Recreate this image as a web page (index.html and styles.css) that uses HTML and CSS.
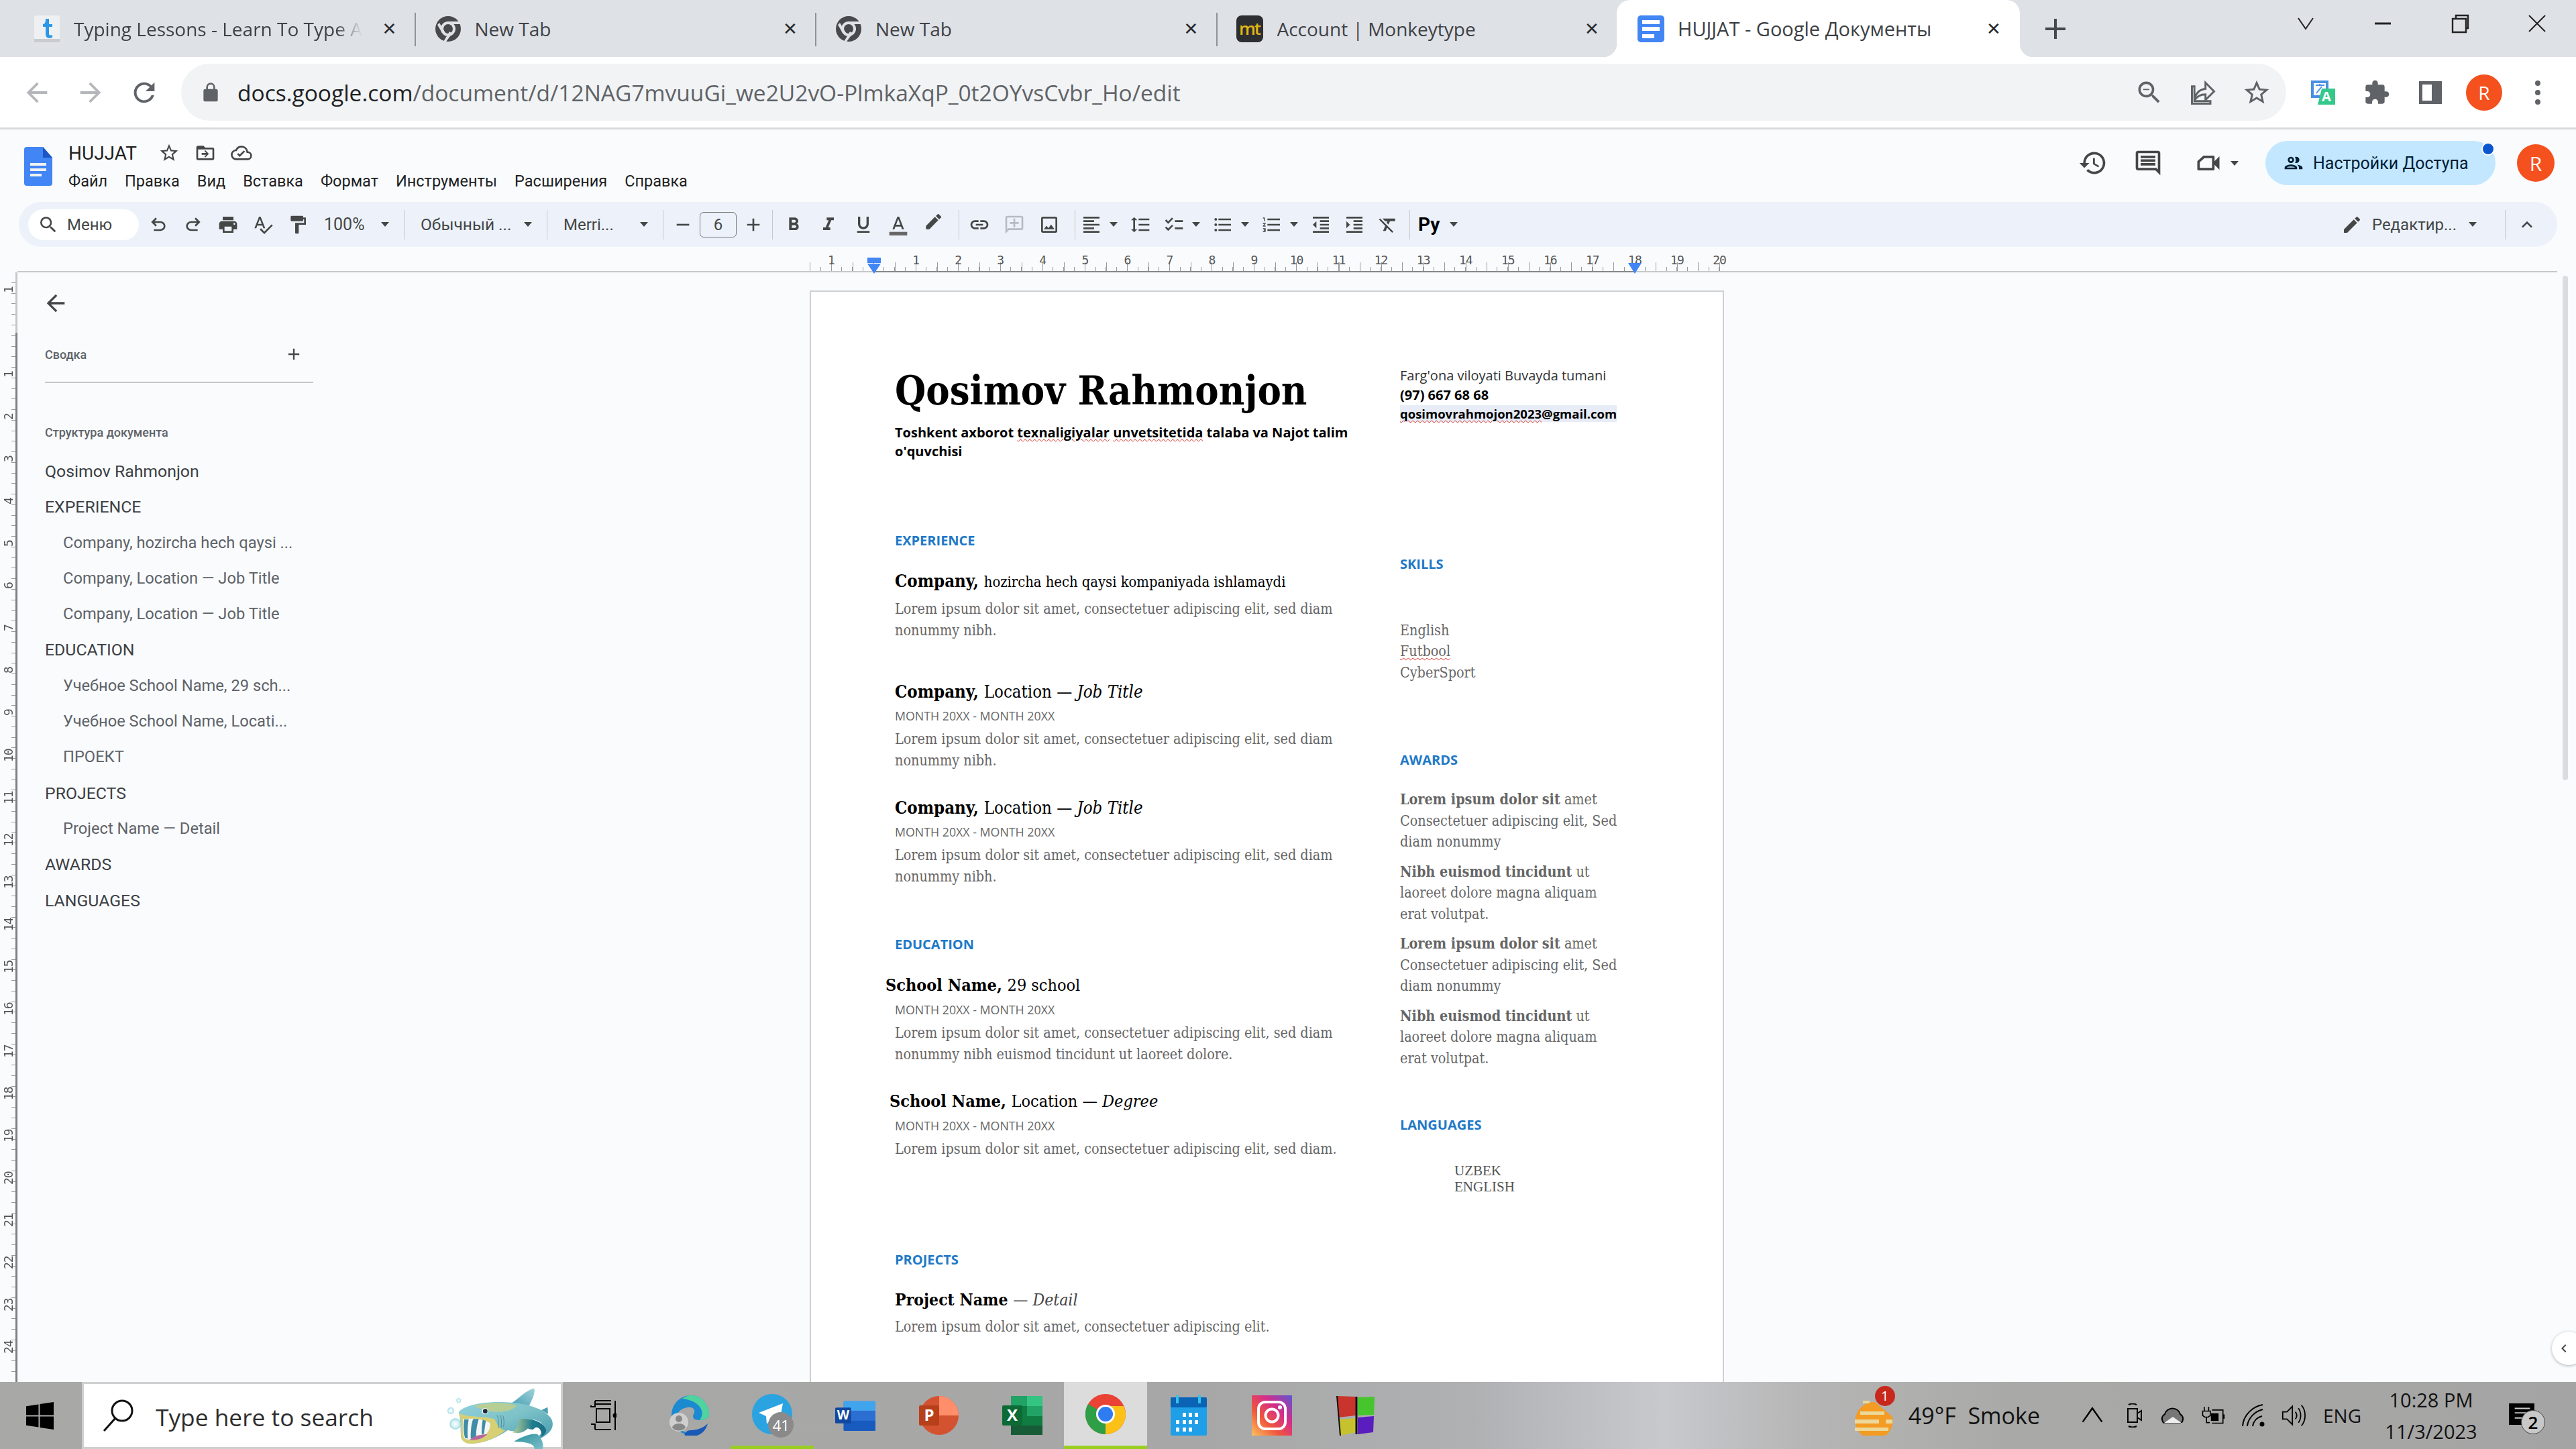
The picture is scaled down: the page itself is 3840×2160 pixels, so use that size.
FILE: index.html
```html
<!DOCTYPE html>
<html lang="en">
<head>
<meta charset="utf-8">
<title>HUJJAT - Google Документы</title>
<link rel="stylesheet" href="styles.css">
</head>
<body>
<div class="screen">
  <div class="tabstrip">
    <div class="tab first">
      <svg class="fav" viewBox="0 0 40 40"><rect x="1" y="0" width="38" height="40" rx="3" fill="#eef0f2"/><rect x="1" y="35" width="38" height="5" fill="#c9cbce"/><path d="M18 5h5v8h5v4h-5v10c0 3 2 3 5 2v4c-6 2-10 0-10-5V17h-4v-4c3 0 4-3 4-8z" fill="#2b97e8"/></svg>
      <span class="tabtitle fade">Typing Lessons - Learn To Type A</span><span class="tabx">✕</span>
    </div>
    <div class="tab">
      <svg class="fav" viewBox="0 0 40 40"><circle cx="20" cy="20" r="19" fill="#47494c"/><circle cx="20" cy="20" r="11" fill="#dee1e6"/><circle cx="20" cy="20" r="7" fill="#47494c"/><path d="M20 9h17l2 4H20zM11 26l-7-12 3-3 9 15zM26 27l-9 12h-4l9-15z" fill="#dee1e6"/></svg>
      <span class="tabtitle">New Tab</span><span class="tabx">✕</span>
    </div>
    <div class="tab">
      <svg class="fav" viewBox="0 0 40 40"><circle cx="20" cy="20" r="19" fill="#47494c"/><circle cx="20" cy="20" r="11" fill="#dee1e6"/><circle cx="20" cy="20" r="7" fill="#47494c"/><path d="M20 9h17l2 4H20zM11 26l-7-12 3-3 9 15zM26 27l-9 12h-4l9-15z" fill="#dee1e6"/></svg>
      <span class="tabtitle">New Tab</span><span class="tabx">✕</span>
    </div>
    <div class="tab last">
      <span class="mt">mt</span>
      <span class="tabtitle">Account | Monkeytype</span><span class="tabx">✕</span>
    </div>
    <div class="tab active">
      <svg class="fav" viewBox="0 0 40 40"><rect x="0" y="0" width="40" height="40" rx="5" fill="#4285f4"/><path d="M7 7h26v6H7zM7 17h26v6H7zM7 28h18v6H7z" fill="#fff"/></svg>
      <span class="tabtitle dark">HUJJAT - Google Документы</span><span class="tabx">✕</span>
    </div>
    <svg class="newtab" viewBox="0 0 32 32"><path d="M14 1h4v13h13v4H18v13h-4V18H1v-4h13z" fill="#45484c"/></svg>
    <div class="winctl">
      <svg class="wc" viewBox="0 0 30 30"><path d="M4 7l11 16L26 7" fill="none" stroke="#222" stroke-width="2"/></svg>
      <svg class="wc" viewBox="0 0 30 30"><path d="M3 15h24" stroke="#222" stroke-width="3"/></svg>
      <svg class="wc" viewBox="0 0 30 30"><path d="M4 8h20v20H4zM9 8V3h18v19h-3" fill="none" stroke="#222" stroke-width="2.4"/></svg>
      <svg class="wc" viewBox="0 0 30 30"><path d="M3 3l24 24M27 3L3 27" stroke="#222" stroke-width="2"/></svg>
    </div>
  </div>

  <div class="navbar">
    <svg class="nav off" viewBox="0 0 24 24"><path d="M20 11H7.83l5.59-5.59L12 4l-8 8 8 8 1.41-1.41L7.83 13H20v-2z"/></svg>
    <svg class="nav off" viewBox="0 0 24 24"><path d="M12 4l-1.41 1.41L16.17 11H4v2h12.17l-5.58 5.59L12 20l8-8z"/></svg>
    <svg class="nav" viewBox="0 0 24 24"><path d="M17.65 6.35A7.96 7.96 0 0 0 12 4a8 8 0 1 0 7.73 10h-2.08A6 6 0 1 1 12 6c1.66 0 3.14.69 4.22 1.78L13 11h7V4l-2.35 2.35z"/></svg>
    <div class="omnibox">
      <svg class="lock" viewBox="0 0 24 24"><path d="M18 8h-1V6a5 5 0 0 0-10 0v2H6a2 2 0 0 0-2 2v10a2 2 0 0 0 2 2h12a2 2 0 0 0 2-2V10a2 2 0 0 0-2-2zM9 6a3 3 0 0 1 6 0v2H9V6z"/></svg>
      <span class="url"><b>docs.google.com</b>/document/d/12NAG7mvuuGi_we2U2vO-PlmkaXqP_0t2OYvsCvbr_Ho/edit</span>
      <svg class="omni" viewBox="0 0 24 24"><path d="M15.5 14h-.79l-.28-.27A6.47 6.47 0 0 0 16 9.5 6.5 6.5 0 1 0 9.5 16c1.61 0 3.09-.59 4.23-1.57l.27.28v.79l5 4.99L20.49 19l-4.99-5zm-6 0C7.01 14 5 11.99 5 9.5S7.01 5 9.5 5 14 7.01 14 9.5 11.99 14 9.5 14zM7 9h5v1H7z"/></svg>
      <svg class="omni" viewBox="0 0 24 24"><path d="M14 4l7 7-7 7v-4.5c-4 0-7 1.5-9 5 .7-5 3.500-9 9-9.500zM3 7v14h15v-2H5V7z" fill="none" stroke="#5f6368" stroke-width="1.6"/></svg>
      <svg class="omni" viewBox="0 0 24 24"><path d="M22 9.240l-7.190-.62L12 2 9.190 8.630 2 9.240l5.460 4.730L5.820 21 12 17.270 18.180 21l-1.630-7.030L22 9.240zM12 15.400l-3.760 2.270 1-4.280-3.320-2.880 4.380-.38L12 6.100l1.710 4.040 4.380.38-3.320 2.880 1 4.280L12 15.400z"/></svg>
    </div>
    <svg class="ext first-ext" viewBox="0 0 40 40"><path d="M2 2h26v26H2z" fill="#4a90e2"/><path d="M6 6h18v18H6z" fill="#fff"/><path d="M9 9h13M15 7v3M10 21l8-10" stroke="#4a90e2" stroke-width="2" fill="none"/><path d="M18 14h20v24H12z" fill="#34c98a"/><text x="25" y="33" class="extA">A</text></svg>
    <svg class="ext" viewBox="0 0 24 24"><path d="M20.500 11H19V7a2 2 0 0 0-2-2h-4V3.500a2.500 2.500 0 0 0-5 0V5H4a2 2 0 0 0-2 2v3.800h1.500a2.700 2.700 0 0 1 0 5.400H2V20a2 2 0 0 0 2 2h3.800v-1.500a2.700 2.700 0 0 1 5.400 0V22H17a2 2 0 0 0 2-2v-4h1.500a2.500 2.500 0 0 0 0-5z" fill="#5f6368"/></svg>
    <svg class="ext" viewBox="0 0 40 40"><path d="M3 3h34v34H3z" fill="#5f6368"/><path d="M8 8h14v24H8z" fill="#fff"/></svg>
    <span class="avatar small">R</span>
    <svg class="kebab" viewBox="0 0 8 36"><circle cx="4" cy="4" r="4"/><circle cx="4" cy="18" r="4"/><circle cx="4" cy="32" r="4"/></svg>
  </div>
  <div class="chromeline"></div>

  <div class="docshead">
    <svg class="doclogo" viewBox="0 0 42 58"><path d="M4 0h24l14 16v38a4 4 0 0 1-4 4H4a4 4 0 0 1-4-4V4a4 4 0 0 1 4-4z" fill="#4285f4"/><path d="M28 0l14 16H28z" fill="#1a56c4"/><path d="M9 24h24v4H9zM9 32h24v4H9zM9 40h17v4H9z" fill="#f1f1f1"/></svg>
    <div class="docinfo">
      <div class="titlerow">
        <span class="doctitle">HUJJAT</span>
        <svg class="hi" viewBox="0 0 24 24"><path d="M22 9.240l-7.190-.62L12 2 9.190 8.630 2 9.240l5.460 4.730L5.820 21 12 17.270 18.180 21l-1.630-7.030L22 9.240zM12 15.400l-3.760 2.270 1-4.280-3.320-2.880 4.380-.38L12 6.100l1.710 4.040 4.380.38-3.320 2.880 1 4.280L12 15.400z"/></svg>
        <svg class="hi" viewBox="0 0 24 24"><path d="M20 6h-8l-2-2H4a2 2 0 0 0-2 2v12a2 2 0 0 0 2 2h16a2 2 0 0 0 2-2V8a2 2 0 0 0-2-2zm0 12H4V8h16v10zM12 9l-1 1 2 2H8v2h5l-2 2 1 1 4-4z"/></svg>
        <svg class="hi" viewBox="0 0 24 24"><path d="M19.350 10.040A7.490 7.490 0 0 0 12 4a7.500 7.500 0 0 0-6.650 4.040A6 6 0 0 0 6 20h13a5 5 0 0 0 .35-9.960zM19 18H6a4 4 0 0 1-.44-7.970l1.070-.11.500-.95A5.460 5.460 0 0 1 12 6a5.500 5.500 0 0 1 5.390 4.420l.3 1.500 1.530.11A3 3 0 0 1 19 18zm-9-1.500l-3-3 1.400-1.400 1.600 1.600 4.600-4.600 1.400 1.400z"/></svg>
      </div>
      <nav class="menu"><span>Файл</span><span>Правка</span><span>Вид</span><span>Вставка</span><span>Формат</span><span>Инструменты</span><span>Расширения</span><span>Справка</span></nav>
    </div>
    <div class="headright">
      <svg class="ha h-hist" viewBox="0 0 24 24"><path d="M13 3a9 9 0 0 0-9 9H1l3.890 3.890.07.140L9 12H6a7 7 0 1 1 2.050 4.950l-1.420 1.420A9 9 0 1 0 13 3zm-1 5v5l4.280 2.540.72-1.210-3.500-2.080V8z"/></svg>
      <svg class="ha h-comm" viewBox="0 0 24 24"><path d="M21.990 4A2 2 0 0 0 20 2H4a2 2 0 0 0-2 2v12a2 2 0 0 0 2 2h14l4 4zM20 4v13.170L18.830 16H4V4zM6 12h12v2H6zm0-3h12v2H6zm0-3h12v2H6z"/></svg>
      <svg class="ha meet" viewBox="0 0 24 24"><path d="M21 6.500l-4 4V7a1 1 0 0 0-1-1H8L3 10.500V17a1 1 0 0 0 1 1h12a1 1 0 0 0 1-1v-3.500l4 4zM15 16H5v-4.700L8.800 8H15z"/></svg>
      <span class="caret c1"></span>
      <div class="share">
        <svg class="shareicon" viewBox="0 0 24 24"><path d="M9 13.750c-2.340 0-7 1.170-7 3.500V19h14v-1.750c0-2.330-4.660-3.500-7-3.500zM4.340 17c.84-.58 2.870-1.250 4.660-1.250s3.820.67 4.660 1.250zM9 12a3.500 3.500 0 1 0 0-7 3.500 3.500 0 0 0 0 7zm0-5a1.500 1.500 0 1 1 0 3 1.500 1.500 0 0 1 0-3zm7.040 6.810c1.160.84 1.960 1.960 1.960 3.440V19h4v-1.750c0-2.020-3.500-3.170-5.960-3.440zM15 12a3.500 3.500 0 0 0 0-7c-.54 0-1.040.13-1.500.35a5.460 5.460 0 0 1 0 6.300c.46.220.96.350 1.500.35z"/></svg>
        <span>Настройки Доступа</span>
        <i class="sharedot"></i>
      </div>
      <span class="avatar large">R</span>
    </div>
  </div>

  <div class="tools">
    <div class="menusearch">
      <svg class="ti-svg" viewBox="0 0 24 24"><path d="M15.5 14h-.79l-.28-.27A6.470 6.470 0 0 0 16 9.500 6.500 6.500 0 1 0 9.500 16c1.610 0 3.090-.59 4.230-1.570l.27.280v.790l5 4.990L20.490 19l-4.990-5zm-6 0C7.010 14 5 11.990 5 9.500S7.010 5 9.500 5 14 7.010 14 9.500 11.990 14 9.500 14z"/></svg>
      <span>Меню</span>
    </div>
    <div class="group g1">
      <svg class="ti-svg" viewBox="0 0 24 24"><path d="M7 19v-2h7.100q1.570 0 2.740-1Q18 15 18 13.500T16.840 11q-1.170-1-2.740-1H7.800l2.600 2.600L9 14 4 9l5-5 1.400 1.400L7.800 8h6.300q2.430 0 4.160 1.570Q20 11.150 20 13.500t-1.740 3.930Q16.530 19 14.100 19z"/></svg>
      <svg class="ti-svg" viewBox="0 0 24 24"><path d="M9.900 19q-2.430 0-4.160-1.570Q4 15.850 4 13.500t1.740-3.930Q7.470 8 9.900 8h6.300l-2.600-2.600L15 4l5 5-5 5-1.400-1.400 2.600-2.600H9.900q-1.570 0-2.740 1Q6 12 6 13.500T7.160 16q1.170 1 2.740 1H17v2z"/></svg>
      <svg class="ti-svg" viewBox="0 0 24 24"><path d="M19 8H5c-1.660 0-3 1.340-3 3v6h4v4h12v-4h4v-6c0-1.660-1.340-3-3-3zm-3 11H8v-5h8v5zm3-7c-.55 0-1-.45-1-1s.45-1 1-1 1 .45 1 1-.45 1-1 1zm-1-9H6v4h12V3z"/></svg>
      <svg class="ti-svg" viewBox="0 0 24 24"><path d="M12.450 16h2.090L9.430 3H7.570L2.460 16h2.090l1.120-3h5.640l1.140 3zm-6.020-5L8.500 5.480 10.570 11H6.430zm15.160.590l-8.090 8.090L9.830 16l-1.410 1.410 5.090 5.090L23 13l-1.410-1.410z"/></svg>
      <svg class="ti-svg" viewBox="0 0 24 24"><path d="M18 4V3a1 1 0 0 0-1-1H5a1 1 0 0 0-1 1v4a1 1 0 0 0 1 1h12a1 1 0 0 0 1-1V6h1v4H9v11a1 1 0 0 0 1 1h2a1 1 0 0 0 1-1v-9h8V4h-3z"/></svg>
      <span class="ttext zoom">100%</span><span class="caret"></span>
    </div>
    <i class="tsep"></i>
    <div class="group"><span class="ttext style">Обычный ...</span><span class="caret"></span></div>
    <i class="tsep"></i>
    <div class="group"><span class="ttext font">Merri...</span><span class="caret"></span></div>
    <i class="tsep"></i>
    <div class="group size">
      <svg class="ti-svg" viewBox="0 0 24 24"><path d="M5 11h14v2H5z"/></svg>
      <span class="sizebox">6</span>
      <svg class="ti-svg" viewBox="0 0 24 24"><path d="M19 13h-6v6h-2v-6H5v-2h6V5h2v6h6z"/></svg>
    </div>
    <i class="tsep"></i>
    <div class="group biu">
      <svg class="ti-svg" viewBox="0 0 24 24"><path d="M15.600 10.790c.970-.67 1.650-1.770 1.650-2.790 0-2.260-1.750-4-4-4H7v14h7.040c2.090 0 3.710-1.700 3.710-3.790 0-1.520-.860-2.820-2.150-3.420zM10 6.500h3c.830 0 1.500.670 1.500 1.500s-.670 1.500-1.500 1.500h-3v-3zm3.500 9H10v-3h3.500c.830 0 1.500.670 1.500 1.500s-.670 1.500-1.500 1.500z"/></svg>
      <svg class="ti-svg" viewBox="0 0 24 24"><path d="M10 4v3h2.210l-3.420 8H6v3h8v-3h-2.210l3.420-8H18V4z"/></svg>
      <svg class="ti-svg" viewBox="0 0 24 24"><path d="M12 17c3.310 0 6-2.690 6-6V3h-2.500v8c0 1.930-1.570 3.500-3.500 3.500S8.500 12.930 8.500 11V3H6v8c0 3.310 2.690 6 6 6zm-7 2v2h14v-2H5z"/></svg>
      <svg class="ti-svg" viewBox="0 0 24 24"><path d="M2 20h20v4H2z" fill="#666"/><path d="M11 3L5.500 17h2.250l1.120-3h6.250l1.120 3h2.250L13 3h-2zm-1.380 9L12 5.670 14.380 12H9.620z"/></svg>
      <svg class="ti-svg" viewBox="0 0 24 24"><path d="M17.750 7L14 3.250l-10 10V17h3.750l10-10zm2.960-2.960a1 1 0 0 0 0-1.410L18.370.29a1 1 0 0 0-1.410 0L15 2.250 18.750 6l1.960-1.960z"/></svg>
    </div>
    <i class="tsep"></i>
    <div class="group ins">
      <svg class="ti-svg" viewBox="0 0 24 24"><path d="M17 7h-4v2h4c1.650 0 3 1.350 3 3s-1.350 3-3 3h-4v2h4c2.760 0 5-2.240 5-5s-2.240-5-5-5zm-6 8H7c-1.650 0-3-1.350-3-3s1.350-3 3-3h4V7H7c-2.760 0-5 2.240-5 5s2.240 5 5 5h4v-2zm-3-4h8v2H8z"/></svg>
      <svg class="ti-svg faint" viewBox="0 0 24 24"><path d="M20 2H4a2 2 0 0 0-2 2v18l4-4h14a2 2 0 0 0 2-2V4a2 2 0 0 0-2-2zm0 14H5.170L4 17.170V4h16v12zM11 5h2v4h4v2h-4v4h-2v-4H7V9h4z"/></svg>
      <svg class="ti-svg" viewBox="0 0 24 24"><path d="M19 5v14H5V5h14m0-2H5a2 2 0 0 0-2 2v14a2 2 0 0 0 2 2h14a2 2 0 0 0 2-2V5a2 2 0 0 0-2-2zm-4.860 8.860l-3 3.870L9 13.140 6 17h12l-3.860-5.140z"/></svg>
    </div>
    <i class="tsep"></i>
    <div class="group tight">
      <svg class="ti-svg" viewBox="0 0 24 24"><path d="M15 15H3v2h12v-2zm0-8H3v2h12V7zM3 13h18v-2H3v2zm0 8h18v-2H3v2zM3 3v2h18V3H3z"/></svg><span class="caret"></span>
      <svg class="ti-svg" viewBox="0 0 24 24"><path d="M6 7h2.500L5 3.500 1.500 7H4v10H1.500L5 20.500 8.500 17H6V7zm4-2v2h12V5H10zm0 14h12v-2H10v2zm0-6h12v-2H10v2z"/></svg>
      <svg class="ti-svg" viewBox="0 0 24 24"><path d="M22 7h-9v2h9V7zm0 8h-9v2h9v-2zM5.540 11L2 7.460l1.410-1.410 2.120 2.120 4.240-4.240 1.410 1.410L5.540 11zm0 8L2 15.460l1.410-1.410 2.120 2.120 4.240-4.240 1.410 1.410L5.540 19z"/></svg><span class="caret"></span>
      <svg class="ti-svg" viewBox="0 0 24 24"><path d="M4 10.500c-.830 0-1.500.670-1.500 1.500s.670 1.500 1.500 1.500 1.500-.670 1.500-1.500-.670-1.500-1.500-1.500zm0-6c-.830 0-1.500.670-1.500 1.500S3.170 7.500 4 7.500 5.500 6.830 5.500 6 4.830 4.500 4 4.500zm0 12c-.830 0-1.500.680-1.500 1.500s.680 1.500 1.500 1.500 1.500-.680 1.500-1.500-.670-1.500-1.500-1.500zM7 19h14v-2H7v2zm0-6h14v-2H7v2zm0-8v2h14V5H7z"/></svg><span class="caret"></span>
      <svg class="ti-svg" viewBox="0 0 24 24"><path d="M2 17h2v.500H3v1h1v.500H2v1h3v-4H2v1zm1-9h1V4H2v1h1v3zm-1 3h1.800L2 13.100v.900h3v-1H3.200L5 10.900V10H2v1zm5-6v2h14V5H7zm0 14h14v-2H7v2zm0-6h14v-2H7v2z"/></svg><span class="caret"></span>
      <svg class="ti-svg" viewBox="0 0 24 24"><path d="M11 17h10v-2H11v2zm-8-5l4 4V8l-4 4zm0 9h18v-2H3v2zM3 3v2h18V3H3zm8 6h10V7H11v2zm0 4h10v-2H11v2z"/></svg>
      <svg class="ti-svg" viewBox="0 0 24 24"><path d="M3 21h18v-2H3v2zM3 8v8l4-4-4-4zm8 9h10v-2H11v2zM3 3v2h18V3H3zm8 6h10V7H11v2zm0 4h10v-2H11v2z"/></svg>
      <svg class="ti-svg" viewBox="0 0 24 24"><path d="M3.270 5L2 6.270l6.970 6.970L6.500 19h3l1.570-3.660L16.730 21 18 19.730 3.550 5.270 3.270 5zM6 5v.180L8.820 8h2.400l-.720 1.680 2.100 2.100L14.210 8H20V5H6z"/></svg>
    </div>
    <i class="tsep"></i>
    <div class="group rugroup"><span class="ttext ru">Ру</span><span class="caret"></span></div>
    <div class="toolsright">
      <svg class="ti-svg" viewBox="0 0 24 24"><path d="M3 17.250V21h3.750L17.810 9.940l-3.750-3.750L3 17.250zM20.710 7.040a1 1 0 0 0 0-1.410l-2.340-2.340a1 1 0 0 0-1.410 0l-1.830 1.830 3.750 3.750 1.830-1.830z"/></svg>
      <span class="ttext edit">Редактир...</span><span class="caret"></span>
      <i class="tsep rs"></i>
      <svg class="ti-svg up" viewBox="0 0 24 24"><path d="M7.410 15.410L12 10.830l4.590 4.580L18 14l-6-6-6 6z"/></svg>
    </div>
  </div>

  <div class="hruler">
    <div class="hticks"></div>
    <div class="hmargin"></div>
    <div class="hnums">
      <span>1</span><span class="none"></span><span>1</span><span>2</span><span>3</span><span>4</span><span>5</span><span>6</span><span>7</span><span>8</span><span>9</span><span>10</span><span>11</span><span>12</span><span>13</span><span>14</span><span>15</span><span>16</span><span>17</span><span>18</span><span>19</span><span>20</span>
    </div>
    <svg class="marker m-left" viewBox="0 0 20 24"><rect x="0" y="0" width="20" height="8" fill="#4285f4"/><path d="M0 9h20L10 24z" fill="#4285f4"/></svg>
    <svg class="marker m-right" viewBox="0 0 20 16"><path d="M0 0h20L10 16z" fill="#4285f4"/></svg>
  </div>

  <div class="workspace">
    <div class="vruler">
      <span>1</span><span class="none"></span><span>1</span><span>2</span><span>3</span><span>4</span><span>5</span><span>6</span><span>7</span><span>8</span><span>9</span><span>10</span><span>11</span><span>12</span><span>13</span><span>14</span><span>15</span><span>16</span><span>17</span><span>18</span><span>19</span><span>20</span><span>21</span><span>22</span><span>23</span><span>24</span>
    </div>
    <aside class="outline">
      <svg class="back" viewBox="0 0 24 24"><path d="M20 11H7.830l5.590-5.590L12 4l-8 8 8 8 1.410-1.410L7.830 13H20v-2z"/></svg>
      <div class="summary"><span>Сводка</span><svg class="plus" viewBox="0 0 24 24"><path d="M19 13h-6v6h-2v-6H5v-2h6V5h2v6h6z"/></svg></div>
      <div class="outline-label">Структура документа</div>
      <ul class="outline-list">
        <li class="h1">Qosimov Rahmonjon</li>
        <li class="h1">EXPERIENCE</li>
        <li class="h2">Company, hozircha hech qaysi ...</li>
        <li class="h2">Company, Location — Job Title</li>
        <li class="h2">Company, Location — Job Title</li>
        <li class="h1">EDUCATION</li>
        <li class="h2">Учебное School Name, 29 sch...</li>
        <li class="h2">Учебное School Name, Locati...</li>
        <li class="h2">ПРОЕКТ</li>
        <li class="h1">PROJECTS</li>
        <li class="h2">Project Name — Detail</li>
        <li class="h1">AWARDS</li>
        <li class="h1">LANGUAGES</li>
      </ul>
    </aside>
    <main class="page">
      <div class="col-left">
        <h1 class="name">Qosimov Rahmonjon</h1>
        <p class="sub">Toshkent axborot <u>texnaligiyalar</u> <u>unvetsitetida</u> talaba va Najot talim<br>o'quvchisi</p>
        <h2 class="sec s-exp">EXPERIENCE</h2>
        <h3 class="job j-first">Company, <span>hozircha hech qaysi kompaniyada ishlamaydi</span></h3>
        <p class="lorem l-first">Lorem ipsum dolor sit amet, consectetuer adipiscing elit, sed diam nonummy nibh.</p>
        <h3 class="job j-2">Company, <span class="loc">Location — <em>Job Title</em></span></h3>
        <div class="date">MONTH 20XX - MONTH 20XX</div>
        <p class="lorem">Lorem ipsum dolor sit amet, consectetuer adipiscing elit, sed diam nonummy nibh.</p>
        <h3 class="job j-3">Company, <span class="loc">Location — <em>Job Title</em></span></h3>
        <div class="date">MONTH 20XX - MONTH 20XX</div>
        <p class="lorem">Lorem ipsum dolor sit amet, consectetuer adipiscing elit, sed diam nonummy nibh.</p>
        <h2 class="sec s-edu">EDUCATION</h2>
        <h3 class="job j-school">School Name, <span class="loc">29 school</span></h3>
        <div class="date">MONTH 20XX - MONTH 20XX</div>
        <p class="lorem">Lorem ipsum dolor sit amet, consectetuer adipiscing elit, sed diam nonummy nibh euismod tincidunt ut laoreet dolore.</p>
        <h3 class="job j-school2">School Name, <span class="loc">Location — <em>Degree</em></span></h3>
        <div class="date">MONTH 20XX - MONTH 20XX</div>
        <p class="lorem nowrap">Lorem ipsum dolor sit amet, consectetuer adipiscing elit, sed diam.</p>
        <h2 class="sec s-prj">PROJECTS</h2>
        <h3 class="job j-first j-prj">Project Name <span class="loc">— <em>Detail</em></span></h3>
        <p class="lorem l-first">Lorem ipsum dolor sit amet, consectetuer adipiscing elit.</p>
      </div>
      <div class="col-right">
        <div class="contact">
          <div>Farg'ona viloyati Buvayda tumani</div>
          <div class="bold">(97) 667 68 68</div>
          <div class="bold email"><span class="mail"><u>qosimovrahmojon2023</u>@gmail.com</span></div>
        </div>
        <h2 class="sec s-skills">SKILLS</h2>
        <div class="skills">
          <div>English</div>
          <div><u>Futbool</u></div>
          <div>CyberSport</div>
        </div>
        <h2 class="sec s-awards">AWARDS</h2>
        <p class="lorem award a-first"><b>Lorem ipsum dolor sit</b> amet<br>Consectetuer adipiscing elit, Sed<br>diam nonummy</p>
        <p class="lorem award"><b>Nibh euismod tincidunt</b> ut<br>laoreet dolore magna aliquam<br>erat volutpat.</p>
        <p class="lorem award"><b>Lorem ipsum dolor sit</b> amet<br>Consectetuer adipiscing elit, Sed<br>diam nonummy</p>
        <p class="lorem award"><b>Nibh euismod tincidunt</b> ut<br>laoreet dolore magna aliquam<br>erat volutpat.</p>
        <h2 class="sec s-lang">LANGUAGES</h2>
        <div class="langs">UZBEK<br>ENGLISH</div>
      </div>
    </main>
    <div class="scrolltrack"><div class="scrollthumb"></div></div>
    <div class="sidetoggle"><svg viewBox="0 0 24 24"><path d="M15.410 7.410L14 6l-6 6 6 6 1.410-1.410L10.830 12z"/></svg></div>
  </div>

  <footer class="taskbar">
    <svg class="win" viewBox="0 0 40 40"><path d="M0 6l18-2.500V19H0zM20 3l20-3v19H20zM0 21h18v15.500L0 34zM20 21h20v19l-20-3z" fill="#000"/></svg>
    <div class="search">
      <svg class="searchglass" viewBox="0 0 50 50"><circle cx="30" cy="18" r="15" fill="none" stroke="#111" stroke-width="3"/><path d="M20 29L3 48" stroke="#111" stroke-width="3"/></svg>
      <span class="searchtext">Type here to search</span>
      <svg class="shark" viewBox="80 20 490 280">
        <defs>
          <linearGradient id="sb" x1="0" y1="0" x2="1" y2="1"><stop offset="0" stop-color="#8fd0dc"/><stop offset=".45" stop-color="#7fc3c9"/><stop offset="1" stop-color="#3f97ab"/></linearGradient>
          <linearGradient id="sf" x1="0" y1="1" x2="1" y2="0"><stop offset="0" stop-color="#4a9eb3"/><stop offset="1" stop-color="#9fd3da"/></linearGradient>
          <linearGradient id="sp" x1="0" y1="0" x2="1" y2="0"><stop offset="0" stop-color="#b7cf9a"/><stop offset=".6" stop-color="#1f7c8f"/><stop offset="1" stop-color="#1b6f84"/></linearGradient>
          <linearGradient id="st" x1="0" y1="0" x2="1" y2="1"><stop offset="0" stop-color="#2c8f9c"/><stop offset="1" stop-color="#7cc0cb"/></linearGradient>
          <radialGradient id="bub"><stop offset="0" stop-color="#ffffff"/><stop offset=".7" stop-color="#cdeef4"/><stop offset="1" stop-color="#8fd3df"/></radialGradient>
        </defs>
        <path d="M365 95C400 72 440 30 468 28c6 20-10 52-23 78z" fill="url(#sf)"/>
        <path d="M500 125l28-13 2 30z" fill="#4a9eb3"/>
        <path d="M130 135C150 105 240 85 340 90c90 2 180 30 205 75 20 40-15 70-50 87l-5-12c20-20 30-45 0-65-40-15-70-10-90-10 20 35 10 65-50 50-50 35-100 55-160 60-30 0-50-15-50-35-2-40 0-70-10-105z" fill="url(#sb)"/>
        <path d="M200 105c50-12 130-20 190 0-20 28-90 35-130 22-20-5-45-10-60-22z" fill="#c7cf80" opacity=".75"/>
        <path d="M130 138c35 22 110 12 160 27 10 15 20 50 50 50-40 35-100 60-150 60-40 3-52-20-50-50 2-35 5-55-10-87z" fill="#d6cf74"/>
        <path d="M150 165c40-5 100 0 122 20-2 25-10 40-22 50-30 15-70 25-90 20-15-15-12-60-10-90z" fill="#f4f6f6"/>
        <path d="M155 166h20c-6 30-6 60-4 86l-12-2c-8-25-8-55-4-84zM195 165h25c-8 25-12 50-12 80l-24 8c0-35 2-65 11-88zM238 168l14 5c-4 20-6 38-8 58l-11 5c0-25 0-45 5-68z" fill="#3f8ca6"/>
        <path d="M180 258c20-23 60-23 78-26-13 18-48 30-78 26z" fill="#b6679c"/>
        <path d="M302 148c8 18 8 40 5 58M315 146c8 18 8 40 5 58M328 150c6 16 6 34 3 50" fill="none" stroke="#4d8a9a" stroke-width="3"/>
        <circle cx="248" cy="130" r="14" fill="#f2f2f2"/><circle cx="249" cy="130" r="10" fill="#17293a"/>
        <path d="M400 165c50-5 100 5 120 45 5 15-10 30-20 35 5-30-15-50-30-40-5 10-20 8-30 2-25 25-50 22-70 18 22-15 30-35 30-60z" fill="url(#sp)"/>
        <path d="M378 265c42-25 92-40 107-30 25 25 25 55 20 65h-35c0-20-20-32-92-35z" fill="url(#st)"/>
        <circle cx="130" cy="82" r="10" fill="url(#bub)"/><circle cx="95" cy="128" r="15" fill="url(#bub)"/><circle cx="115" cy="187" r="25" fill="url(#bub)"/>
      </svg>
    </div>
    <svg class="taskview" viewBox="0 0 40 46"><path d="M8 1h24M8 6h24v0M8 44h24M10 13h20v20H10zM2 8v2h6V1M2 36h6v8M38 1v44" fill="none" stroke="#000" stroke-width="2"/><circle cx="38" cy="23" r="3.500"/></svg>
    <div class="apps">
      <span class="app"><svg viewBox="0 0 60 60"><path d="M4 30C4 10 20 0 33 0c16 0 27 13 27 29 0 4-4 8-14 8-8 0-10-3-10-6 0-3 3-4 2-9-1-3-5-5-10-4C16 20 12 26 12 34c0 12 12 26 26 26C16 60 4 46 4 30z" fill="#1c8ad0"/><path d="M33 0c16 0 27 13 27 29 0 4-4 8-14 8 4-6 6-12 0-20C40 9 30 6 20 5c4-3 9-5 13-5z" fill="#4fd4a0"/><path d="M24 60c16 4 30-2 34-18-8 8-18 10-26 10-4 0-10 4-8 8z" fill="#1859b5"/><circle cx="15" cy="40" r="14" fill="#cfcfcf"/><circle cx="15" cy="35" r="5" fill="#888"/><path d="M5 48c2-8 18-8 20 0-4 6-16 6-20 0z" fill="#888"/></svg></span>
      <span class="app tg"><svg viewBox="0 0 60 60"><circle cx="30" cy="30" r="30" fill="#2aa3e0"/><path d="M10 28l36-14-6 33-12-9-6 7-1-12z" fill="#fff"/></svg><b class="tgbadge">41</b></span>
      <span class="app"><svg viewBox="0 0 76 60"><rect x="16" y="3" width="60" height="56" rx="3" fill="#2b6fd3"/><rect x="16" y="3" width="60" height="18" fill="#41a5ee"/><rect x="16" y="40" width="60" height="19" fill="#185abd"/><rect x="0" y="15" width="30" height="30" rx="2" fill="#11479f"/><text x="15" y="38" class="officetxt">W</text></svg></span>
      <span class="app"><svg viewBox="0 0 60 60"><circle cx="30" cy="30" r="29" fill="#d35230"/><path d="M30 1a29 29 0 0 1 29 29H30z" fill="#ff8f6b"/><rect x="0" y="15" width="30" height="30" rx="2" fill="#b7401a"/><text x="15" y="38" class="officetxt">P</text></svg></span>
      <span class="app"><svg viewBox="0 0 60 60"><rect x="13" y="1" width="47" height="58" rx="2" fill="#107c41"/><rect x="13" y="1" width="24" height="15" fill="#21a366"/><rect x="37" y="1" width="23" height="15" fill="#33c481"/><rect x="37" y="16" width="23" height="15" fill="#21a366"/><rect x="13" y="45" width="47" height="14" fill="#185c37"/><rect x="0" y="15" width="30" height="30" rx="2" fill="#0b6a35"/><text x="15" y="38" class="officetxt">X</text></svg></span>
      <span class="app chrome"><svg viewBox="0 0 60 60"><circle cx="30" cy="30" r="30" fill="#ea4335"/><path d="M30 30L4 15A30 30 0 0 0 30 60z" fill="#2e9f47"/><path d="M30 30h30a30 30 0 0 1-30 30z" fill="#fbc116"/><path d="M57 18H30v12h30a30 30 0 0 0-3-12z" fill="#fbc116"/><circle cx="30" cy="30" r="14" fill="#fff"/><circle cx="30" cy="30" r="11" fill="#2f7cf0"/></svg></span>
      <span class="app"><svg viewBox="0 0 60 60"><rect x="3" y="3" width="54" height="57" rx="2" fill="#1e9fe8"/><rect x="3" y="3" width="54" height="15" rx="2" fill="#0a63b4"/><path d="M11 0h4v12h-4zM44 0h4v12h-4z" fill="#34c0ea"/><path d="M21 26h5v6h-5zM30 26h5v6h-5zM39 26h5v6h-5zM11 37h5v6h-5zM21 37h5v6h-5zM30 37h5v6h-5zM39 37h5v6h-5zM11 48h5v6h-5zM21 48h5v6h-5zM30 48h5v6h-5z" fill="#fff"/></svg></span>
      <span class="app"><svg viewBox="0 0 60 60"><defs><linearGradient id="ig" x1="0" y1="1" x2="1" y2="0"><stop offset="0" stop-color="#fdc15e"/><stop offset=".35" stop-color="#f0563c"/><stop offset=".65" stop-color="#d52d8a"/><stop offset="1" stop-color="#5a57d4"/></linearGradient></defs><rect width="60" height="60" fill="url(#ig)"/><rect x="10" y="10" width="40" height="40" rx="10" fill="none" stroke="#fff" stroke-width="4"/><circle cx="30" cy="30" r="9.500" fill="none" stroke="#fff" stroke-width="4"/><circle cx="42" cy="18" r="3" fill="#fff"/></svg></span>
      <span class="app"><svg viewBox="0 0 60 60"><path d="M2 1l28 1v28L4 33z" fill="#c9352c"/><path d="M33 3l25-1-1 27-24 1z" fill="#47c52d"/><path d="M4 36l26-2v21L7 60z" fill="#c6c22e"/><path d="M33 33l24-2-1 24-23 3z" fill="#5a1dbe"/><path d="M2 1l5 59" stroke="#111" stroke-width="2"/><path d="M31 2v56" stroke="#111" stroke-width="3"/></svg></span>
    </div>
    <div class="tray">
      <span class="weather"><svg viewBox="0 0 60 60"><path d="M30 10a28 28 0 1 0 26 22z" fill="#f39b22"/><path d="M12 8h10v4H12zM8 24h36v5H8zM0 36h36v6H0zM0 48h50v5H0zM46 36h10v6H46z" fill="#ecd89a"/></svg><b class="wbadge">1</b></span>
      <span class="wtext">49°F&nbsp; Smoke</span>
      <svg class="tr chev" viewBox="0 0 30 30"><path d="M3 23L15 6l12 17" fill="none" stroke="#000" stroke-width="2"/></svg>
      <svg class="tr" viewBox="0 0 30 36"><path d="M9 2c4-2 8-2 12 0M9 34c4 2 8 2 12 0M8 8h14v20H8zM22 15l6-4v14l-6-4" fill="none" stroke="#000" stroke-width="2"/></svg>
      <svg class="tr" viewBox="0 0 36 36"><path d="M6 30a8 8 0 0 1 0-14 12 12 0 0 1 23 0 8 8 0 0 1 0 14z" fill="#777" stroke="#000" stroke-width="2"/><path d="M4 30l14-10 14 10z" fill="#eee"/></svg>
      <svg class="tr" viewBox="0 0 44 36"><path d="M6 2v8M14 2v8M3 10h14v8l-4 3H7l-4-3zM10 21v10h6M20 8h20v24H20" fill="none" stroke="#000" stroke-width="2"/><rect x="18" y="14" width="14" height="14"/><rect x="40" y="16" width="3" height="8"/></svg>
      <svg class="tr" viewBox="0 0 36 36"><path d="M2 34C3 18 16 5 32 2M9 34C10 22 20 12 32 9M17 34c1-7 6-13 14-15" fill="none" stroke="#000" stroke-width="2"/><circle cx="31" cy="31" r="3.500"/></svg>
      <svg class="tr" viewBox="0 0 40 40"><path d="M2 14h7l9-9v30l-9-9H2zM23 14c3 4 3 8 0 12M28 8c5 7 5 17 0 24M33 3c8 9 8 25 0 34" fill="none" stroke="#000" stroke-width="2"/></svg>
      <span class="eng">ENG</span>
      <div class="clock"><span>10:28 PM</span><span>11/3/2023</span></div>
      <span class="notif"><svg viewBox="0 0 42 36"><path d="M0 0h40v34H0z"/><path d="M9 8h24M9 15h24M9 23h16" stroke="#ccc" stroke-width="2"/></svg><b class="nbadge">2</b></span>
    </div>
  </footer>
</div>
</body>
</html>
```
FILE: styles.css
```css
* { box-sizing: border-box; }
html, body { margin: 0; padding: 0; }
body { width: 3840px; height: 2160px; overflow: hidden; font-family: "Open Sans", "Noto Sans", sans-serif; background: #f9fbfd; }
svg { display: block; flex: none; }
.screen { width: 3840px; height: 2160px; display: flex; flex-direction: column; overflow: hidden; }

/* tabs */
.tabstrip { height: 85px; background: #dee1e6; display: flex; align-items: center; padding-left: 22px; flex: none; }
.tab { width: 597.5px; height: 85px; padding: 0 26px 0 28px; display: flex; align-items: center; position: relative; }
.tab::after { content: ""; position: absolute; right: 0; top: 19px; height: 50px; width: 2px; background: #8f9296; }
.tab.last::after { display: none; }
.tab.active { width: 601px; background: #fff; border-radius: 20px 20px 0 0; margin-left: -2px; padding: 0 26px 0 31px; }
.tab.active::before, .tab.active::after { content: ""; position: absolute; bottom: 0; width: 20px; height: 20px; top: auto; }
.tab.active::before { left: -20px; background: radial-gradient(circle at 0 0, transparent 20px, #fff 20.5px); }
.tab.active::after { right: -20px; background: radial-gradient(circle at 100% 0, transparent 20px, #fff 20.5px); }
.fav { width: 40px; height: 40px; margin-right: 20px; }
.mt { width: 40px; height: 40px; border-radius: 8px; background: #2c2e31; color: #e2b714; font-size: 26px; font-weight: 600; line-height: 38px; text-align: center; margin-right: 21px; letter-spacing: -2px; }
.tabtitle { flex: 1; font-size: 28px; color: #3f4246; white-space: nowrap; overflow: hidden; }
.tabtitle.dark { color: #3c4043; font-size: 29px; }
.tabtitle.fade { -webkit-mask-image: linear-gradient(90deg, #000 90%, transparent 99%); margin-right: 24px; }
.tabx { font-size: 26px; color: #27292c; width: 26px; text-align: center; font-family: "DejaVu Sans", sans-serif; font-weight: 700; }
.newtab { width: 32px; height: 32px; margin-left: 37px; }
.winctl { margin-left: auto; display: flex; margin-right: 43px; gap: 85px; }
.wc { width: 30px; height: 30px; margin-top: -16px; }

/* nav */
.navbar { height: 105px; background: #fff; display: flex; align-items: center; flex: none; padding-left: 32px; }
.nav { width: 46px; height: 46px; fill: #5f6368; margin-right: 34px; }
.nav.off { fill: #b4b6ba; }
.omnibox { width: 3138px; height: 85px; margin-left: -2px; border-radius: 43px; background: #f1f3f4; display: flex; align-items: center; padding: 0 22px 0 28px; }
.lock { width: 32px; height: 34px; fill: #5f6368; margin-right: 24px; }
.url { font-size: 33.500px; color: #5f6368; flex: 1; white-space: nowrap; }
.url b { font-weight: 400; color: #202124; }
.omni { width: 44px; height: 44px; fill: #5f6368; margin-left: 36px; }
.ext { width: 40px; height: 40px; margin-left: 40px; }
.ext.first-ext { margin-left: 35px; }
.extA { font: 700 20px "Open Sans", sans-serif; fill: #fff; text-anchor: middle; }
.avatar { border-radius: 50%; background: #f4511e; color: #fff; display: flex; align-items: center; justify-content: center; }
.avatar.small { width: 54px; height: 54px; font-size: 28px; margin-left: 33px; }
.kebab { width: 8px; height: 36px; fill: #5f6368; margin-left: 49px; }
.chromeline { height: 3px; background: #d9dadc; flex: none; }

/* docs head */
.docshead { height: 108px; flex: none; display: flex; align-items: flex-start; padding: 26px 32px 0 36px; background: #f9fbfd; }
.doclogo { width: 42px; height: 58px; }
.docinfo { margin-left: 24px; margin-top: -11px; }
.titlerow { display: flex; align-items: center; height: 40px; }
.doctitle { font-family: Roboto, sans-serif; font-size: 28px; color: #1f1f1f; width: 134px; }
.hi { width: 32px; height: 32px; fill: #444746; margin-right: 22px; }
.menu { display: flex; gap: 26px; margin-top: 6px; font-family: Roboto, sans-serif; font-size: 23.500px; line-height: 32px; color: #1f1f1f; }
.headright { margin-left: auto; display: flex; align-items: center; height: 66px; margin-top: -9px; }
.ha { width: 44px; height: 44px; fill: #444746; margin-right: 36px; }
.h-hist { margin-right: 38px; }
.h-comm { margin-right: 46px; }
.ha.meet { margin-right: 11px; }
.caret { width: 0; height: 0; border-left: 6px solid transparent; border-right: 6px solid transparent; border-top: 7px solid #444746; flex: none; }
.c1 { margin-right: 40px; }
.share { width: 343px; height: 66px; border-radius: 33px; background: #c2e7ff; display: flex; align-items: center; padding-left: 26px; gap: 13px; font-family: Roboto, sans-serif; font-size: 25px; color: #001d35; position: relative; white-space: nowrap; }
.shareicon { width: 32px; height: 32px; fill: #001d35; }
.sharedot { position: absolute; right: 1px; top: 2px; width: 20px; height: 20px; background: #0b57d0; border-radius: 50%; border: 2px solid #fff; }
.avatar.large { width: 56px; height: 56px; font-size: 30px; margin-left: 32px; }

/* toolbar */
.tools { height: 67px; flex: none; margin: 0 28px; border-radius: 34px; background: #edf2fa; display: flex; align-items: center; padding-left: 14px; font-family: Roboto, sans-serif; }
.menusearch { width: 165px; height: 46px; border-radius: 23px; background: #fff; display: flex; align-items: center; padding-left: 14px; gap: 12px; font-size: 24px; color: #444746; flex: none; }
.ti-svg { width: 32px; height: 32px; fill: #444746; }
.ti-svg.faint { fill: #b7bcc4; }
.group { display: flex; align-items: center; gap: 20px; flex: none; }
.group > .caret { margin-left: 3px; }
.g1 { margin-left: 13px; }
.ttext { font-size: 25px; color: #444746; white-space: nowrap; }
.zoom { margin-left: 3px; width: 62px; }
.style { width: 131px; font-size: 24.500px; }
.font { width: 91px; font-size: 24px; }
.edit { font-size: 24px; }
.tsep { width: 1px; height: 44px; background: #c7c7c7; margin: 0 24px 0 22px; flex: none; }
.size { gap: 9px; margin-left: -11px; margin-right: -10px; }
.biu { margin-left: -9px; }
.ins { margin-left: -10px; }
.sizebox { width: 55px; height: 38px; border: 1px solid #747775; border-radius: 6px; text-align: center; font-size: 24px; line-height: 36px; color: #444746; }
.tight { gap: 0; margin-left: -16px; margin-right: -6px; }
.tight > .ti-svg { margin-left: 18px; }
.tight > .ti-svg:first-child { margin-left: 0; }
.tight > .caret { margin-left: 11px; }
.rugroup { margin-left: -12px; gap: 9px; }
.ru { font-weight: 700; color: #000; font-size: 28px; width: 35px; }
.toolsright { margin-left: auto; display: flex; align-items: center; gap: 14px; padding-right: 29px; }
.toolsright .caret { margin-left: 4px; }
.rs { margin: 0 2px 0 28px; }

/* horizontal ruler */
.hruler { height: 38px; flex: none; margin-left: 26px; margin-right: 28px; position: relative; border-bottom: 2px solid #c5c7ca; }
.hticks { position: absolute; left: 1181px; width: 1362px; bottom: 0; height: 13px; background:
  linear-gradient(#f9fbfd, #f9fbfd) 0 0 / 100% 7px no-repeat,
  repeating-linear-gradient(90deg, #9a9a9a 0 1px, transparent 1px 15.760px); }
.hticks::before { content: ""; position: absolute; inset: 0; background: repeating-linear-gradient(90deg, transparent 0 0.500px, #9a9a9a 0.500px 1.500px, transparent 1.500px 31.520px) 0 0 / 100% 100%; }
.hmargin { position: absolute; left: 1278px; width: 1133px; bottom: -2px; height: 2px; background: #85878a; }
.hnums { display: flex; padding-left: 1181.500px; padding-top: 8px; font-size: 18px; line-height: 24px; font-family: "DejaVu Sans Mono", monospace; color: #555; letter-spacing: -1px; position: relative; }
.hnums span { width: 63.050px; text-align: center; flex: none; }
.marker { position: absolute; }
.m-left { left: 1267px; top: 16px; width: 20px; height: 24px; }
.m-right { left: 2401px; top: 24px; width: 20px; height: 16px; }

/* workspace */
.workspace { flex: 1; min-height: 0; display: flex; position: relative; overflow: hidden; }
.vruler { width: 26px; flex: none; padding-top: 0; font-size: 18px; font-family: "DejaVu Sans Mono", monospace; color: #555; background:
  linear-gradient(#c5c7ca 0 90px, #7d7f82 90px) 100% 0 / 3px 100% no-repeat,
  repeating-linear-gradient(0deg, transparent 0 14.760px, #9a9a9a 14.760px 15.760px) 17px 0 / 9px 100% no-repeat; }
.vruler span { display: block; height: 63.050px; width: 26px; text-align: center; line-height: 26px; writing-mode: vertical-rl; transform: rotate(180deg); letter-spacing: -1px; position: relative; top: -5px; }

/* outline */
.outline { width: 1181px; flex: none; padding: 26px 0 0 41px; font-family: Roboto, sans-serif; }
.back { width: 40px; height: 40px; fill: #444746; margin-left: -4px; }
.summary { width: 400px; height: 76px; display: flex; align-items: center; justify-content: space-between; border-bottom: 2px solid #c7c7c7; margin-top: 23px; padding: 0 15px 8px 0; font-size: 18px; color: #5f6368; font-weight: 500; }
.plus { width: 28px; height: 28px; fill: #444746; }
.outline-label { font-size: 18px; line-height: 18px; color: #5f6368; font-weight: 500; margin-top: 65px; }
.outline-list { list-style: none; margin: 22px 0 0; padding: 0; font-size: 24.800px; }
.outline-list li { height: 53.300px; line-height: 53.300px; white-space: nowrap; }
.h1 { color: #3c4043; }
.h2 { color: #5f6368; padding-left: 27px; }
.outline-list .h2 { font-size: 23.700px; }

/* page */
.page { width: 1363px; flex: none; background: #fff; margin: 27px 0 0 0; border: 2px solid #cfd0d2; border-bottom: 0; padding: 106px 0 0 125px; display: flex; height: 1700px; }
.col-left { width: 753px; flex: none; }
.col-right { width: 420px; flex: none; }
h1, h2, h3, p { margin: 0; font-weight: inherit; font-size: inherit; }
.name { font-family: "DejaVu Serif Condensed", "DejaVu Serif", serif; font-weight: 700; font-size: 59px; line-height: 84px; color: #000; white-space: nowrap; }
.sub { font-weight: 700; font-size: 20px; line-height: 28px; width: 690px; margin-top: 6px; color: #000; }
u { text-decoration: underline wavy #d93025 1px; text-underline-offset: 2px; }
.sec { font-weight: 700; font-size: 20px; line-height: 26px; color: #2079c7; }
.s-exp { margin-top: 106px; }
.s-edu { margin-top: 73px; }
.s-prj { margin-top: 136px; }
.job { font-family: "DejaVu Serif Condensed", "DejaVu Serif", serif; font-weight: 700; font-size: 25.600px; line-height: 40px; color: #000; white-space: nowrap; }
.job span { font-weight: 400; font-size: 21.800px; }
.job .loc { font-size: 25.600px; }
.j-first { margin-top: 27px; }
.j-2 { margin-top: 56px; }
.j-3 { margin-top: 35px; }
.j-school { margin: 28px 0 0 -14px; font-size: 25px; }
.j-school .loc { font-size: 25px; }
.j-school2 { margin: 35px 0 0 -8px; font-size: 25px; }
.j-school2 .loc { font-size: 25px; }
.j-prj { font-size: 24.600px; margin-top: 27px; }
.j-prj .loc { font-size: 24.600px; color: #444; }
.date { font-size: 17.800px; line-height: 24px; color: #666; margin-top: 4px; }
.lorem { font-family: "DejaVu Serif Condensed", "DejaVu Serif", serif; font-size: 21.400px; line-height: 31.500px; color: #666; margin-top: 7px; width: 680px; }
.l-first { margin-top: 4px; }
.nowrap { white-space: nowrap; }
.contact { margin-top: 5px; font-size: 20px; line-height: 28.500px; color: #333; white-space: nowrap; }
.bold { font-weight: 700; color: #000; }
.email { font-size: 18.500px; }
.mail { background: #e8ecf7; }
.s-skills { margin-top: 196px; }
.skills { margin-top: 70px; font-family: "DejaVu Serif Condensed", "DejaVu Serif", serif; font-size: 21.400px; line-height: 31.500px; color: #666; }
.s-awards { margin-top: 102px; }
.award { width: 335px; margin-top: 13px; }
.a-first { margin-top: 30px; }
.award b { font-weight: 700; }
.s-lang { margin-top: 71px; }
.langs { margin: 44px 0 0 81px; font-family: "Liberation Serif", serif; font-size: 21px; line-height: 23.500px; color: #555; }

.scrolltrack { flex: 1; position: relative; }
.scrollthumb { position: absolute; right: 12px; top: 5px; width: 8px; height: 752px; background: #dadce0; border-radius: 4px; }
.sidetoggle { position: absolute; right: -14px; bottom: 25px; width: 50px; height: 50px; border-radius: 50%; background: #fff; box-shadow: 0 1px 4px rgba(0,0,0,.3); padding: 13px 0 0 6px; }
.sidetoggle svg { width: 24px; height: 24px; fill: #444746; }

/* taskbar */
.taskbar { height: 100px; flex: none; display: flex; align-items: center; background: linear-gradient(90deg, #a8a8a6 0, #a7a7a7 1800px, #b0b1b3 2200px, #c8c9cd 2480px, #b5b5b5 2700px, #a9a9a7 3000px, #a4a4a4 100%); }
.win { width: 41px; height: 41px; margin-left: 39px; }
.search { width: 717px; height: 100px; margin-left: 42px; background: #fff; border: 3px solid #cfcfcf; display: flex; align-items: center; padding-left: 27px; position: relative; font-size: 35.300px; color: #2d2d2d; }
.searchtext { padding-top: 3px; }
.searchglass { width: 50px; height: 50px; margin-right: 30px; }
.shark { position: absolute; right: 6px; bottom: -3px; width: 163.300px; height: 93.300px; }
.taskview { width: 40px; height: 46px; margin-left: 40px; }
.apps { display: flex; height: 100px; margin-left: 46px; }
.app { width: 124.200px; height: 100px; display: flex; align-items: center; justify-content: center; position: relative; }
.app svg { width: 60px; height: 60px; }
.app.tg { border-bottom: 5px solid #9acd22; }
.app.chrome { background: #dcdcdc; border-bottom: 5px solid #9acd22; }
.tgbadge { position: absolute; right: 30px; top: 45px; width: 38px; height: 38px; border-radius: 50%; background: #8a8a8a; color: #fff; font-weight: 400; font-size: 22px; text-align: center; line-height: 38px; }
.officetxt { font: 700 24px "Open Sans", sans-serif; fill: #fff; text-anchor: middle; }
.tray { margin-left: auto; display: flex; align-items: center; height: 100px; padding-right: 58px; }
.weather { position: relative; width: 60px; height: 60px; margin-right: 20px; }
.weather svg { width: 60px; height: 60px; }
.wbadge { position: absolute; left: 30px; top: -14px; width: 30px; height: 30px; border-radius: 50%; background: #c8281c; color: #fff; font-weight: 400; font-size: 20px; text-align: center; line-height: 30px; }
.wtext { font-size: 34px; color: #111; margin-right: 60px; white-space: nowrap; }
.tr { width: 36px; height: 36px; margin-right: 24px; }
.eng { font-size: 28px; color: #111; margin-left: 2px; }
.clock { display: flex; flex-direction: column; align-items: center; font-size: 29px; line-height: 47px; color: #111; margin-left: 34px; width: 140px; white-space: nowrap; }
.notif { position: relative; width: 42px; height: 36px; margin-left: 46px; }
.notif svg { width: 40px; height: 34px; }
.nbadge { position: absolute; left: 18px; top: 10px; width: 36px; height: 36px; border-radius: 50%; background: #c8c8c8; border: 1px solid #444; text-align: center; line-height: 34px; font-size: 26px; color: #000; font-weight: 600; }
```
